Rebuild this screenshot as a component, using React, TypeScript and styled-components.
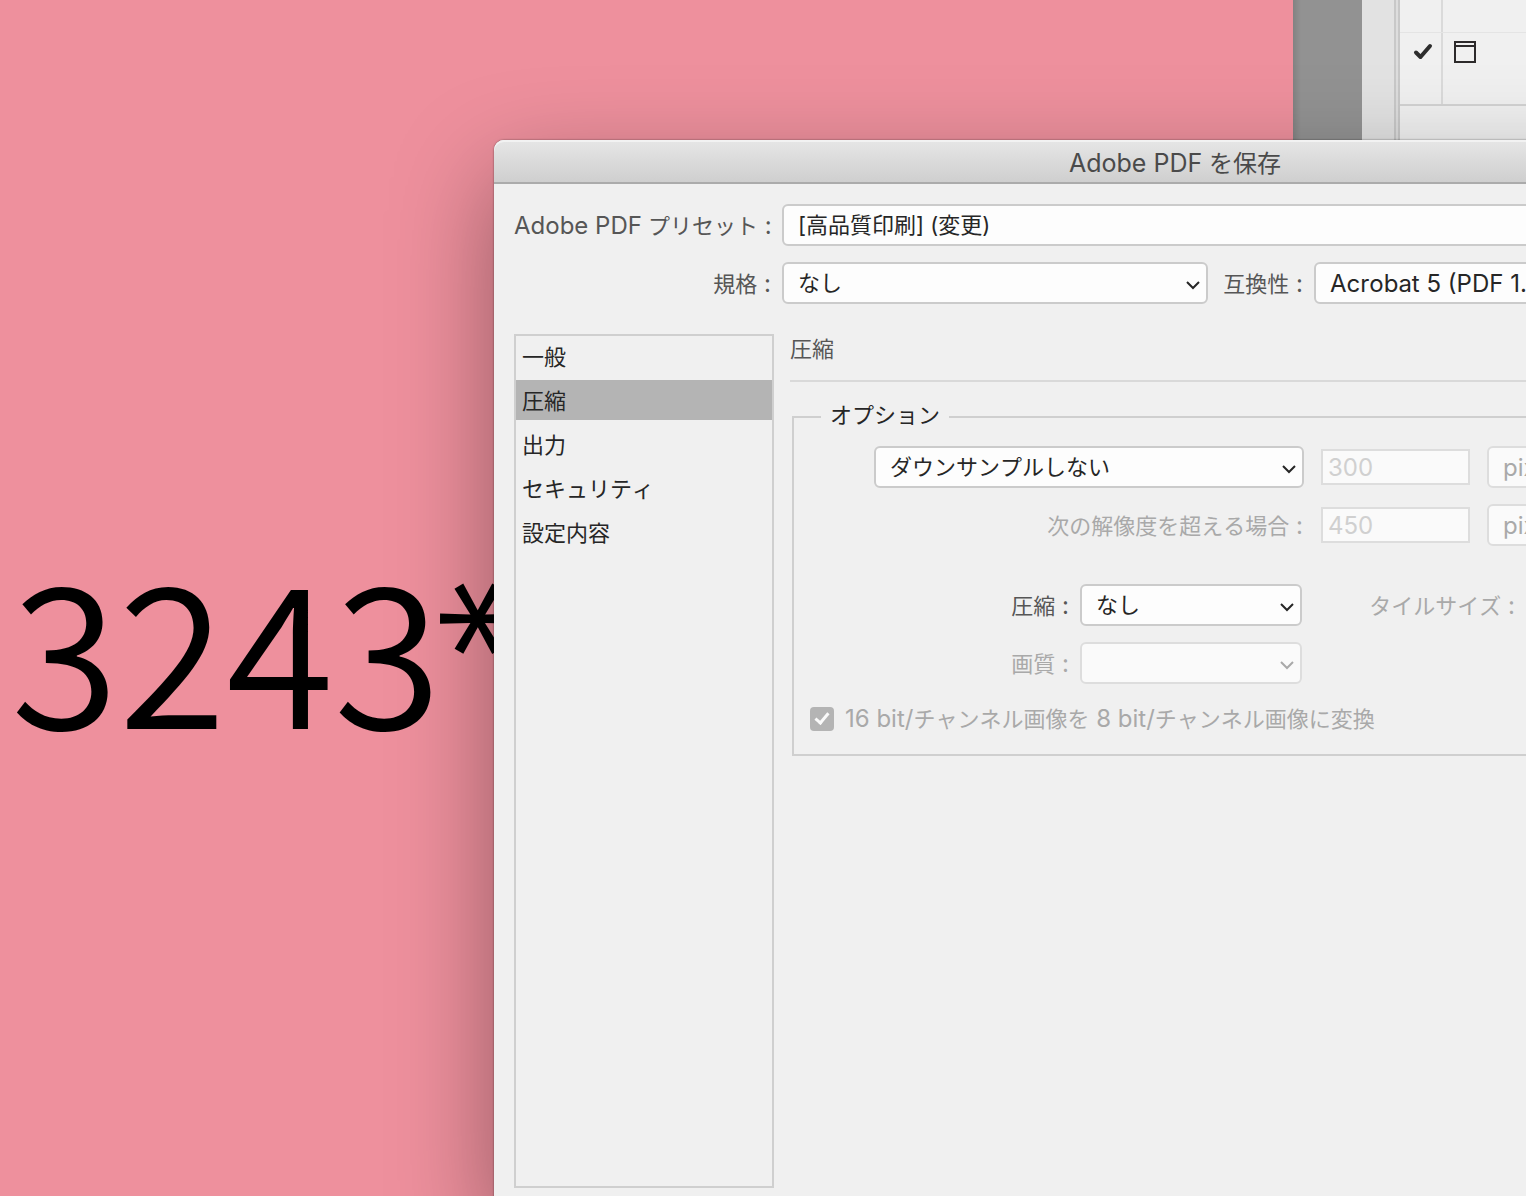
import React, { useId, useState } from "react";
import styled, { createGlobalStyle } from "styled-components";

const UI_FONT = `Inter, "Noto Sans CJK JP", sans-serif`;

const GlobalStyle = createGlobalStyle`
  *, *::before, *::after { box-sizing: border-box; }
  body { margin: 0; font-family: ${UI_FONT}; font-size: 22px; line-height: 32px; font-kerning: none; color: #262626; }
`;

/* Workspace behind the dialog */

const Desktop = styled.div`
  position: relative;
  display: flex;
  height: 100vh;
  overflow: hidden;
  background: #f0f0f0;
`;

const Artboard = styled.main`
  position: relative;
  flex: 1;
  background: #ee909d;
`;

const ArtText = styled.div`
  position: absolute;
  left: 11px;
  top: 544px;
  font-family: "Noto Sans CJK JP", sans-serif;
  font-size: 196px;
  font-weight: 350;
  line-height: 200px;
  color: #000;
  white-space: nowrap;
`;

const Asterisk = styled.span`
  display: inline-block;
  margin-left: -24px;
  font-family: Inter, sans-serif;
  font-size: 184px;
  font-weight: 300;
  line-height: 200px;
  vertical-align: top;
  transform: rotate(30deg);
`;

const Pasteboard = styled.div`
  width: 69px;
  background: linear-gradient(to right, #828282, #929292 8px);
`;

const DockGutter = styled.div`
  width: 38px;
  background: #e2e2e2;
  border-right: 2px solid #c8c8c8;
  display: flex;
  justify-content: flex-end;

  &::after {
    content: "";
    width: 4px;
    border-left: 2px solid #c8c8c8;
    background: #dddddd;
  }
`;

const Panel = styled.aside`
  width: 126px;
  background: #f0f0f0;
`;

const PanelRow = styled.div<{ $tall?: boolean }>`
  display: flex;
  height: ${(p) => (p.$tall ? 73 : 33)}px;
  border-bottom: ${(p) => (p.$tall ? "2px solid #d2d2d2" : "1px solid #e4e4e4")};
`;

const PanelCell = styled.div<{ $lead?: boolean }>`
  width: ${(p) => (p.$lead ? 43 : 83)}px;
  padding: 8px 0 0 ${(p) => (p.$lead ? 13 : 11)}px;
  border-right: ${(p) => (p.$lead ? "2px solid #dadada" : "none")};

  svg {
    display: block;
  }
`;

/* Dialog */

const Dialog = styled.section`
  position: absolute;
  left: 494px;
  top: 140px;
  width: 1362px;
  background: #f0f0f0;
  border-radius: 10px;
  box-shadow: 0 0 2px rgba(0, 0, 0, 0.55), 0 36px 100px rgba(0, 0, 0, 0.38);
`;

const TitleBar = styled.header`
  height: 44px;
  border-bottom: 2px solid #ababab;
  border-radius: 10px 10px 0 0;
  background: linear-gradient(#e6e6e6, #cfcfcf);
  box-shadow: inset 0 2px 0 #f2f2f2;
`;

const Title = styled.h1`
  margin: 0;
  font-size: 24px;
  line-height: 46px;
  font-weight: 400;
  text-align: center;
  color: #4a4a4a;
`;

const DialogBody = styled.div`
  display: flex;
  flex-direction: column;
  gap: 30px;
  padding: 20px;
`;

const Latin = styled.span<{ $size?: number }>`
  font-size: ${(p) => p.$size ?? 24}px;
`;

const Stack = styled.div<{ $gap: number }>`
  display: flex;
  flex-direction: column;
  gap: ${(p) => p.$gap}px;
`;

const Row = styled.div<{ $gap?: number; $indent?: number }>`
  display: flex;
  align-items: center;
  height: 42px;
  gap: ${(p) => p.$gap ?? 10}px;
  padding-left: ${(p) => p.$indent ?? 0}px;
`;

const Label = styled.label<{ $width?: number; $dim?: boolean }>`
  flex: none;
  width: ${(p) => (p.$width ? `${p.$width}px` : "auto")};
  padding: 1px 1px 0 0;
  text-align: right;
  white-space: nowrap;
  color: ${(p) => (p.$dim ? "#a9a9a9" : "#565656")};
`;

const SelectBox = styled.div<{ $width?: number }>`
  position: relative;
  flex: ${(p) => (p.$width ? "none" : 1)};
  width: ${(p) => (p.$width ? `${p.$width}px` : "auto")};
  height: 42px;
`;

const NativeSelect = styled.select<{ $size: number }>`
  appearance: none;
  display: block;
  width: 100%;
  height: 42px;
  margin: 0;
  padding: 0 36px 0 14px;
  border: 2px solid #cbcbcb;
  border-radius: 6px;
  background: #fdfdfd;
  font-family: ${UI_FONT};
  font-size: ${(p) => p.$size}px;
  font-kerning: none;
  color: #262626;

  &:disabled {
    opacity: 1;
    color: #a9a9a9;
    border-color: #dddddd;
    background: #fafafa;
  }
`;

const Chevron = styled.svg<{ $dim?: boolean }>`
  position: absolute;
  right: 8px;
  top: 18px;
  width: 14px;
  height: 10px;
  fill: none;
  stroke: ${(p) => (p.$dim ? "#a9a9a9" : "#262626")};
  stroke-width: 2;
  pointer-events: none;
`;

const NumberField = styled.input`
  flex: none;
  width: 149px;
  height: 36px;
  margin: 0;
  padding: 0 5px;
  border: 2px solid #dddddd;
  border-radius: 0;
  background: #fafafa;
  font-family: ${UI_FONT};
  font-size: 24px;
  color: #d0d0d0;
`;

const Columns = styled.div`
  display: flex;
  gap: 16px;
`;

const CategoryList = styled.nav`
  flex: none;
  display: flex;
  flex-direction: column;
  gap: 4px;
  width: 260px;
  height: 854px;
  border: 2px solid #cfcfcf;
`;

const CategoryButton = styled.button`
  height: 40px;
  padding: 2px 6px 0;
  border: 0;
  background: none;
  font-family: ${UI_FONT};
  font-size: 22px;
  line-height: 32px;
  font-kerning: none;
  text-align: left;
  color: #262626;

  &[aria-current="true"] {
    background: #b4b4b4;
  }
`;

const Content = styled.div`
  flex: 1;
  min-width: 0;
`;

const SectionTitle = styled.h2`
  margin: 0 0 18px;
  height: 48px;
  border-bottom: 2px solid #d9d9d9;
  font-size: 22px;
  line-height: 30px;
  font-weight: 400;
  color: #565656;
`;

const OptionGroup = styled.fieldset`
  margin: 0 0 0 2px;
  padding: 12px 16px 16px;
  border: 2px solid #cfcfcf;
`;

const Legend = styled.legend`
  margin-left: 11px;
  padding: 0 9px 4px;
  line-height: 30px;
`;

const CheckRow = styled.label`
  display: flex;
  align-items: center;
  gap: 11px;
  height: 38px;
  color: #a9a9a9;
  white-space: pre;
`;

const CheckBox = styled.input`
  appearance: none;
  display: grid;
  place-items: center;
  width: 24px;
  height: 24px;
  margin: 0;
  border-radius: 4px;
  background: #b4b4b4;

  &:checked::after {
    content: "";
    width: 8px;
    height: 14px;
    margin-top: -4px;
    border: solid #fafafa;
    border-width: 0 3px 3px 0;
    transform: rotate(40deg);
  }
`;

type SelectProps = {
  id?: string;
  name?: string;
  value: string;
  width?: number;
  size?: number;
  disabled?: boolean;
};

function Select({ id, name, value, width, size = 22, disabled }: SelectProps) {
  return (
    <SelectBox $width={width}>
      <NativeSelect id={id} aria-label={name} $size={size} disabled={disabled} defaultValue={value}>
        <option value={value}>{value}</option>
      </NativeSelect>
      <Chevron $dim={disabled} viewBox="0 0 14 10" aria-hidden="true">
        <path d="M1 2 7 8l6-6" />
      </Chevron>
    </SelectBox>
  );
}

const Colon = () => <Latin> :</Latin>;

const CATEGORIES = ["一般", "圧縮", "出力", "セキュリティ", "設定内容"];

function LayersPanel() {
  return (
    <Panel>
      <PanelRow>
        <PanelCell $lead />
      </PanelRow>
      <PanelRow $tall>
        <PanelCell $lead>
          <svg width="20" height="20" viewBox="0 0 20 20" fill="none" stroke="#2d2d2d" strokeWidth="4" strokeLinecap="round" strokeLinejoin="round" aria-hidden="true">
            <path d="M3 11.5 7.5 16 17 5" />
          </svg>
        </PanelCell>
        <PanelCell>
          <svg width="22" height="22" viewBox="0 0 22 22" fill="none" stroke="#2d2a2b" strokeWidth="2" aria-hidden="true">
            <path d="M1 1h20v20H1zM1 5h20" />
          </svg>
        </PanelCell>
      </PanelRow>
    </Panel>
  );
}

export default function App() {
  const uid = useId();
  const [category, setCategory] = useState("圧縮");

  return (
    <Desktop>
      <GlobalStyle />
      <Artboard>
        <ArtText>
          3243<Asterisk>*</Asterisk>
        </ArtText>
      </Artboard>
      <Pasteboard />
      <DockGutter />
      <LayersPanel />

      <Dialog role="dialog" aria-labelledby={`${uid}title`}>
        <TitleBar>
          <Title id={`${uid}title`}>
            <Latin $size={25}>Adobe PDF</Latin> を保存
          </Title>
        </TitleBar>
        <DialogBody>
          <Stack $gap={16}>
            <Row>
              <Label $width={258} htmlFor={`${uid}preset`}>
                <Latin>Adobe PDF</Latin> プリセット
                <Colon />
              </Label>
              <Select id={`${uid}preset`} value="[高品質印刷] (変更)" />
            </Row>
            <Row>
              <Label $width={258} htmlFor={`${uid}standard`}>
                規格
                <Colon />
              </Label>
              <Select id={`${uid}standard`} value="なし" width={426} />
              <Label $width={86} htmlFor={`${uid}compat`}>
                互換性
                <Colon />
              </Label>
              <Select id={`${uid}compat`} value="Acrobat 5 (PDF 1.4)" size={24} />
            </Row>
          </Stack>

          <Columns>
            <CategoryList>
              {CATEGORIES.map((name) => (
                <CategoryButton key={name} type="button" aria-current={name === category} onClick={() => setCategory(name)}>
                  {name}
                </CategoryButton>
              ))}
            </CategoryList>

            <Content>
              <SectionTitle>圧縮</SectionTitle>
              <OptionGroup>
                <Legend>オプション</Legend>
                <Stack $gap={38}>
                  <Stack $gap={16}>
                    <Row $gap={17} $indent={64}>
                      <Select name="サンプリング方法" value="ダウンサンプルしない" width={430} />
                      <NumberField aria-label="解像度" defaultValue="300" disabled />
                      <Select name="解像度の単位" value="pixel/inch" width={200} size={24} disabled />
                    </Row>
                    <Row $gap={17}>
                      <Label $width={494} $dim htmlFor={`${uid}limit`}>
                        次の解像度を超える場合
                        <Colon />
                      </Label>
                      <NumberField id={`${uid}limit`} defaultValue="450" disabled />
                      <Select name="上限の単位" value="pixel/inch" width={200} size={24} disabled />
                    </Row>
                  </Stack>
                  <Stack $gap={16}>
                    <Row>
                      <Label $width={260} htmlFor={`${uid}method`}>
                        圧縮
                        <Colon />
                      </Label>
                      <Select id={`${uid}method`} value="なし" width={222} />
                      <Label $width={204} $dim htmlFor={`${uid}tile`}>
                        タイルサイズ
                        <Colon />
                      </Label>
                      <NumberField id={`${uid}tile`} disabled />
                    </Row>
                    <Row>
                      <Label $width={260} $dim htmlFor={`${uid}quality`}>
                        画質
                        <Colon />
                      </Label>
                      <Select id={`${uid}quality`} value="" width={222} disabled />
                    </Row>
                    <CheckRow>
                      <CheckBox type="checkbox" defaultChecked disabled />
                      <span>
                        <Latin>16 bit/</Latin>チャンネル画像を<Latin> 8 bit/</Latin>チャンネル画像に変換
                      </span>
                    </CheckRow>
                  </Stack>
                </Stack>
              </OptionGroup>
            </Content>
          </Columns>
        </DialogBody>
      </Dialog>
    </Desktop>
  );
}
